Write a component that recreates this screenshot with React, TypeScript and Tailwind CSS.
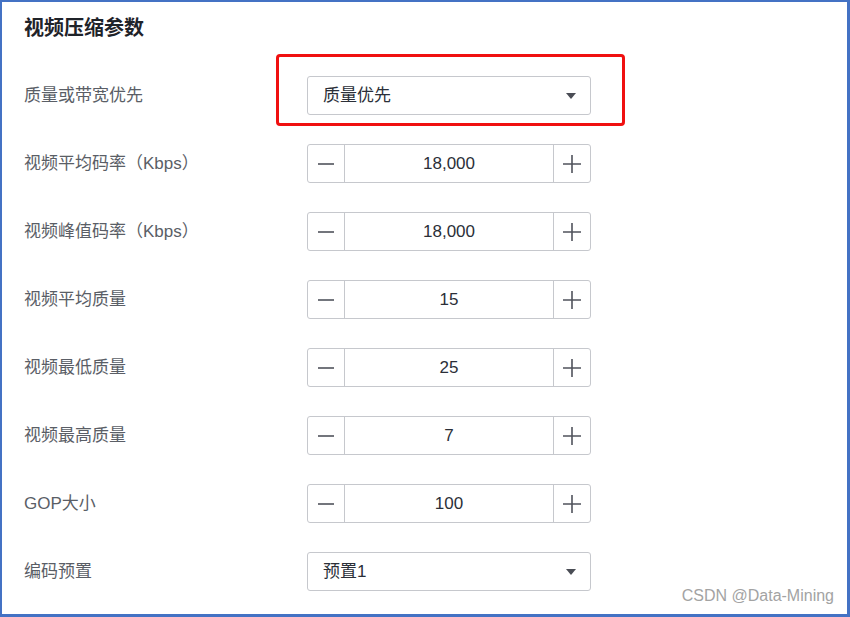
import React from 'react';

const font = "font-['Liberation_Sans','Noto_Sans_CJK_SC',sans-serif]";

type Row =
  | { label: string; kind: 'select'; value: string; highlight?: boolean }
  | { label: string; kind: 'number'; value: string };

const rows: Row[] = [
  { label: '质量或带宽优先', kind: 'select', value: '质量优先', highlight: true },
  { label: '视频平均码率（Kbps）', kind: 'number', value: '18,000' },
  { label: '视频峰值码率（Kbps）', kind: 'number', value: '18,000' },
  { label: '视频平均质量', kind: 'number', value: '15' },
  { label: '视频最低质量', kind: 'number', value: '25' },
  { label: '视频最高质量', kind: 'number', value: '7' },
  { label: 'GOP大小', kind: 'number', value: '100' },
  { label: '编码预置', kind: 'select', value: '预置1' },
];

const Caret = () => (
  <svg width="10" height="6" viewBox="0 0 10 6">
    <path d="M0 0 L10 0 L5 6 Z" fill="#4a4d55" />
  </svg>
);

const Minus = () => (
  <svg width="16" height="16" viewBox="0 0 16 16">
    <path d="M0 8 H16" stroke="#50535c" strokeWidth="1.6" />
  </svg>
);

const Plus = () => (
  <svg width="18" height="18" viewBox="0 0 18 18">
    <path d="M0 9 H18 M9 0 V18" stroke="#50535c" strokeWidth="1.6" />
  </svg>
);

const SelectBox: React.FC<{ value: string; highlight?: boolean }> = ({ value, highlight }) => (
  <div className="relative">
    {highlight && (
      <div className="absolute left-[-31px] top-[-22px] right-[-34px] bottom-[-11px] border-[3px] border-[#f01010] rounded-[4px]" />
    )}
    <div className="flex items-center justify-between w-[284px] h-[39px] pl-[15px] pr-[14px] border border-[#c6c8cd] rounded-[3px] bg-white">
      <span className="text-[17px] text-[#2b2f38]">{value}</span>
      <Caret />
    </div>
  </div>
);

const NumberBox: React.FC<{ value: string }> = ({ value }) => (
  <div className="flex w-[284px] h-[39px] border border-[#c6c8cd] rounded-[3px] bg-white">
    <div className="flex items-center justify-center w-[37px] border-r border-[#c6c8cd]">
      <Minus />
    </div>
    <div className="flex-1 flex items-center justify-center text-[17px] text-[#2b2f38]">{value}</div>
    <div className="flex items-center justify-center w-[37px] border-l border-[#c6c8cd]">
      <Plus />
    </div>
  </div>
);

export default function App() {
  return (
    <div
      className={`relative w-[850px] h-[617px] bg-white border-l-2 border-t-2 border-r-[3px] border-b-[3px] border-[#4472c4] pl-[22px] pt-[12px] ${font}`}
    >
      <h2 className="text-[20px] leading-[28px] font-bold text-[#1f2329]">视频压缩参数</h2>
      <div className="flex flex-col gap-[29px] mt-[34px]">
        {rows.map((r) => (
          <div key={r.label} className="flex items-center">
            <div className="w-[283px] text-[17px] text-[#5a5e66]">{r.label}</div>
            {r.kind === 'select' ? (
              <SelectBox value={r.value} highlight={r.highlight} />
            ) : (
              <NumberBox value={r.value} />
            )}
          </div>
        ))}
      </div>
      <div className="absolute right-[13px] bottom-[6px] text-[16px] text-[#a3a3a3]">CSDN @Data-Mining</div>
    </div>
  );
}
